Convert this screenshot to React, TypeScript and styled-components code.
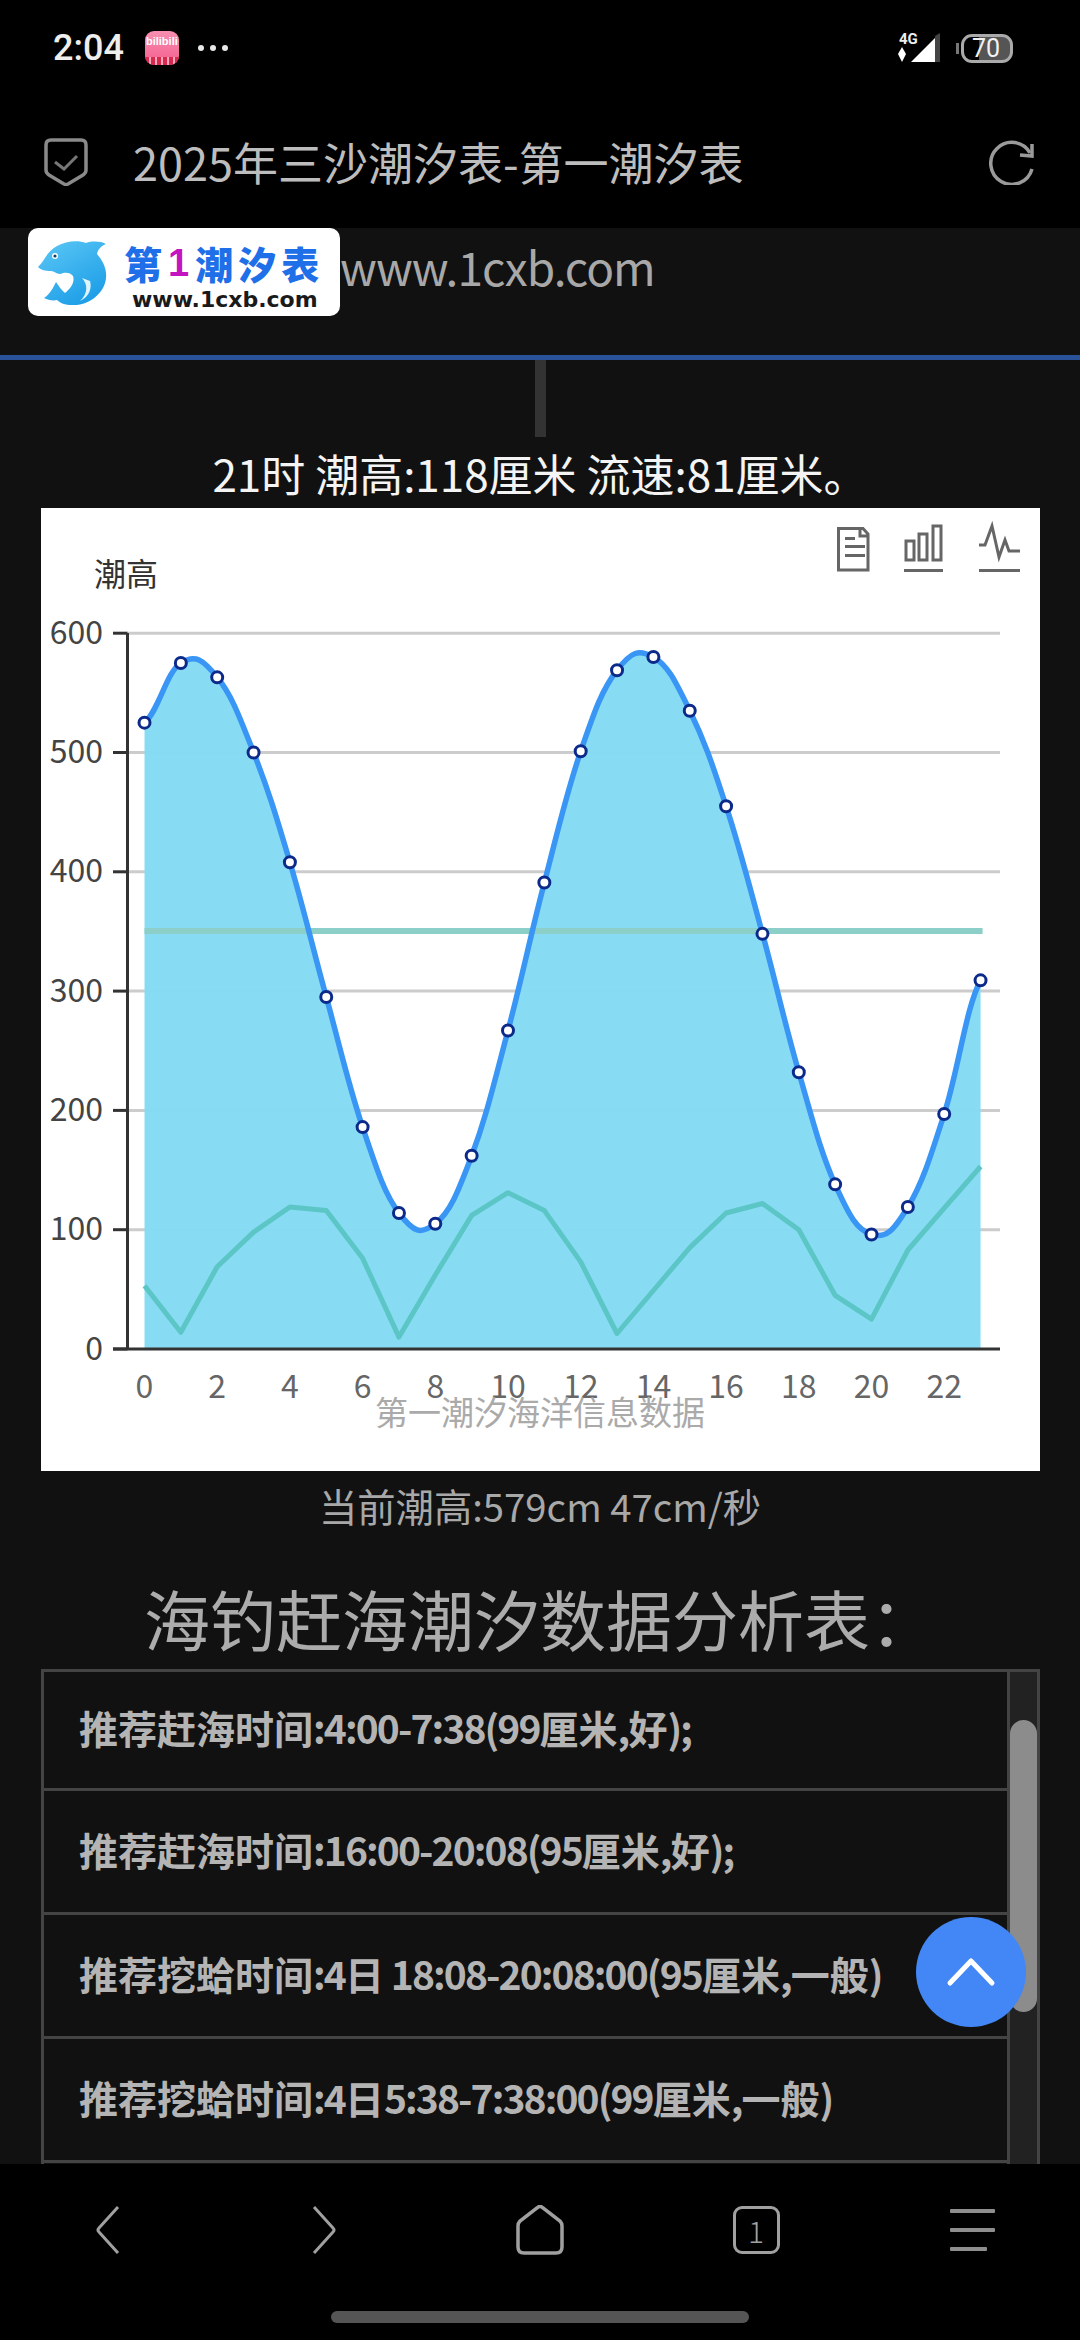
import * as React from "react"
import styled, { createGlobalStyle } from "styled-components"

const CJK = `"Noto Sans CJK SC", "Noto Sans", sans-serif`

const GlobalStyle = createGlobalStyle`
  html, body {
    margin: 0;
    padding: 0;
    background: #000;
  }
  * {
    box-sizing: border-box;
  }
`

const Screen = styled.div`
  position: relative;
  display: flex;
  flex-direction: column;
  width: 1080px;
  height: 2340px;
  overflow: hidden;
  background: #000;
  font-family: ${CJK};
`

const StatusBar = styled.div`
  display: flex;
  align-items: center;
  justify-content: space-between;
  height: 96px;
  padding: 0 67px 0 53px;
`

const StatusGroup = styled.div`
  display: flex;
  align-items: center;
`

const Clock = styled.span`
  font-family: Roboto, sans-serif;
  font-size: 36px;
  font-weight: 500;
  color: #eee;
  margin-right: 21px;
`

const AppBadge = styled.div`
  display: flex;
  flex-direction: column;
  align-items: center;
  justify-content: space-between;
  width: 34px;
  height: 34px;
  margin-right: 19px;
  border-radius: 9px;
  overflow: hidden;
  background: linear-gradient(#f78fb0, #f45f8e);
`

const BadgeLabel = styled.span`
  font-family: "Liberation Sans", sans-serif;
  font-size: 11px;
  font-weight: 700;
  line-height: 12px;
  margin-top: 4px;
  color: #fff;
`

const BadgeStrip = styled.div`
  width: 100%;
  height: 8px;
  background: repeating-linear-gradient(90deg, #d8284f 0 4px, #f7a9b9 4px 6px);
`

const Dots = styled.div`
  display: flex;
  gap: 6px;
`

const Dot = styled.i`
  width: 6px;
  height: 6px;
  border-radius: 50%;
  background: #e8e8e8;
`

const BatteryNub = styled.i`
  width: 3px;
  height: 11px;
  margin: 0 2px 0 13px;
  background: #777;
`

const Battery = styled.div`
  display: flex;
  align-items: center;
  width: 52px;
  height: 29px;
  padding-left: 8px;
  border: 3px solid #aaa;
  border-radius: 11px;
  background: linear-gradient(90deg, #000 32%, #555 32%);
  font-family: Roboto, sans-serif;
  font-size: 25px;
  color: #f2f2f2;
`

const AddressBar = styled.div`
  display: flex;
  align-items: center;
  height: 132px;
  padding: 0 45px 0 44px;
`

const PageTitle = styled.div`
  flex: 1;
  margin-left: 45px;
  font-size: 45px;
  line-height: 60px;
  color: #bdbdbd;
  white-space: nowrap;
`

const Page = styled.main`
  flex: 1;
  min-height: 0;
  overflow: hidden;
  background: #111;
`

const LogoRow = styled.div`
  display: flex;
  align-items: flex-start;
  height: 127px;
  padding-left: 28px;
`

const LogoPlate = styled.div`
  display: flex;
  align-items: flex-start;
  width: 312px;
  height: 88px;
  padding: 12px 0 0 10px;
  border-radius: 10px;
  background: #fff;
`

const LogoWords = styled.div`
  display: flex;
  flex-direction: column;
  margin: 3px 0 0 16px;
`

const LogoName = styled.div`
  display: flex;
  align-items: center;
  height: 40px;
  font-size: 38px;
  font-weight: 900;
  line-height: 40px;
  letter-spacing: 5px;
  color: #1f6fe8;
  white-space: nowrap;
`

const LogoNumeral = styled.span`
  margin: 0 6px 0 1px;
  letter-spacing: 0;
  font-family: "Liberation Sans", sans-serif;
  color: #c414c0;
`

const LogoUrl = styled.div`
  margin: 5px 0 0 8px;
  font-family: "DejaVu Sans", sans-serif;
  font-size: 22px;
  font-weight: 700;
  line-height: 24px;
  color: #1a1a1a;
  white-space: nowrap;
`

const SiteUrl = styled.span`
  font-size: 46px;
  line-height: 76px;
  letter-spacing: -1px;
  color: #a8a8a8;
`

const BlueRule = styled.div`
  height: 5px;
  background: #2a5298;
`

const Stem = styled.div`
  width: 11px;
  height: 77px;
  margin: 0 auto;
  background: #333;
`

const Reading = styled.div`
  padding-top: 3px;
  height: 71px;
  font-size: 44px;
  line-height: 66px;
  text-align: center;
  color: #f4f4f4;
`

const ChartCard = styled.div`
  width: 999px;
  height: 963px;
  margin-left: 41px;
  background: #fff;
`

const ChartSvg = styled.svg`
  display: block;
  width: 999px;
  height: 963px;
`

const Caption = styled.div`
  height: 74px;
  font-size: 38.3px;
  line-height: 70px;
  text-align: center;
  color: #a8a8a8;
`

const Heading = styled.h2`
  height: 124px;
  margin: 0;
  padding-top: 25px;
  font-size: 66px;
  font-weight: 400;
  line-height: 94px;
  text-align: center;
  color: #acacac;
  white-space: nowrap;
`

const Table = styled.div`
  display: flex;
  width: 999px;
  margin-left: 41px;
  border: 3px solid #444;
  border-bottom: 0;
`

const RowList = styled.div`
  width: 966px;
  border-right: 3px solid #444;
`

const Row = styled.div`
  display: flex;
  align-items: center;
  height: 124px;
  padding: 0 0 6px 35px;
  border-bottom: 3px solid #444;
  font-size: 39px;
  font-weight: 700;
  color: #b4b4b4;
  white-space: pre;

  &:first-child {
    height: 119px;
  }
`

// digits and punctuation in the list are set narrower than the Chinese
const TightRun = styled.span`
  letter-spacing: -1.9px;
`

const ScrollTrack = styled.div`
  flex: 1;
  padding-top: 48px;
  background: #222;
`

const ScrollThumb = styled.div`
  width: 27px;
  height: 292px;
  border-radius: 14px;
  background: #8c8c8c;
`

const TopButton = styled.button`
  position: absolute;
  top: 1917px;
  right: 54px;
  display: flex;
  align-items: center;
  justify-content: center;
  width: 110px;
  height: 110px;
  padding: 0;
  border: 0;
  border-radius: 50%;
  background: #4287f5;
`

const BottomNav = styled.nav`
  display: grid;
  grid-template-columns: repeat(5, 216px);
  align-items: center;
  justify-items: center;
  height: 132px;
`

const TabCount = styled.div`
  display: flex;
  align-items: center;
  justify-content: center;
  width: 47px;
  height: 48px;
  border: 3px solid #a0a0a0;
  border-radius: 9px;
  font-size: 30px;
  font-weight: 300;
  color: #a0a0a0;
`

const MenuIcon = styled.div`
  display: flex;
  flex-direction: column;
  width: 45px;
  gap: 15px;
`

const MenuBar = styled.i<{ $width: number }>`
  display: block;
  width: ${(p) => p.$width}px;
  height: 4px;
  border-radius: 1px;
  background: #8e8e8e;
`

const HomeIndicator = styled.div`
  flex: none;
  width: 418px;
  height: 12px;
  margin: 15px auto 17px;
  border-radius: 6px;
  background: #555;
`

const listRows = [
  "推荐赶海时间:4:00-7:38(99厘米,好);",
  "推荐赶海时间:16:00-20:08(95厘米,好);",
  "推荐挖蛤时间:4日 18:08-20:08:00(95厘米,一般)",
  "推荐挖蛤时间:4日5:38-7:38:00(99厘米,一般)",
  "",
]

const tide = [525, 575, 563, 500, 408, 295, 186, 114, 105, 162, 267, 391, 501, 569, 580, 535, 455, 348, 232, 138, 96, 119, 197, 309]
const flow = [53, 14, 69, 98, 119, 116, 76, 10, 62, 112, 131, 116, 73, 13, 49, 85, 114, 122, 100, 45, 25, 83, 118, 153]
const yTicks = [0, 100, 200, 300, 400, 500, 600]
const xTicks = [0, 2, 4, 6, 8, 10, 12, 14, 16, 18, 20, 22]

// plot area, in the card's own coordinates
const plotLeft = 86.5
const plotRight = 959
const plotBottom = 841
const firstX = 103.5
const stepX = 36.35
const perUnit = 1.193

const px = (i: number) => firstX + i * stepX
const py = (v: number) => plotBottom - v * perUnit

const straightPath = (values: number[]) =>
  values.map((v, i) => `${i ? "L" : "M"}${px(i).toFixed(1)} ${py(v).toFixed(1)}`).join(" ")

// Catmull-Rom style smoothing through every sample
const smoothPath = (values: number[]) => {
  let d = `M${px(0).toFixed(1)} ${py(values[0]).toFixed(1)}`
  for (let i = 0; i < values.length - 1; i++) {
    const prev = values[Math.max(i - 1, 0)]
    const next = values[Math.min(i + 2, values.length - 1)]
    const c1y = py(values[i]) + (py(values[i + 1]) - py(prev)) * 0.2
    const c2y = py(values[i + 1]) - (py(next) - py(values[i])) * 0.2
    d += ` C${(px(i) + stepX * 0.4).toFixed(1)} ${c1y.toFixed(1)} ${(px(i + 1) - stepX * 0.4).toFixed(1)} ${c2y.toFixed(1)} ${px(i + 1).toFixed(1)} ${py(values[i + 1]).toFixed(1)}`
  }
  return d
}

const tightenLatin = (text: string) =>
  text.split(/([\x20-\x7e]+)/).map((part, i) => (i % 2 ? <TightRun key={i}>{part}</TightRun> : part))

const TideChart = () => {
  const curve = smoothPath(tide)
  const area = `${curve} L${px(23)} ${plotBottom} L${px(0)} ${plotBottom} Z`
  return (
    <ChartSvg viewBox="0 0 999 963" fontFamily={CJK}>
      {yTicks.slice(1).map((v) => (
        <line key={v} x1={plotLeft} x2={plotRight} y1={py(v)} y2={py(v)} stroke="#ccc" strokeWidth={3} />
      ))}
      <path d={area} fill="#85dbf4" fillOpacity={0.98} />
      <line x1={px(0)} x2={px(23) + 2} y1={423} y2={423} stroke="#8ccfc8" strokeWidth={6} />
      <path d={straightPath(flow)} fill="none" stroke="#5cc6c6" strokeWidth={5} strokeLinejoin="round" />
      <path d={curve} fill="none" stroke="#3a96f5" strokeWidth={5.5} />
      {tide.map((v, i) => (
        <circle key={i} cx={px(i)} cy={py(v)} r={5.5} fill="#fff" stroke="#0c2a8a" strokeWidth={3} />
      ))}

      <line x1={plotLeft} x2={plotLeft} y1={125} y2={plotBottom} stroke="#333" strokeWidth={3} />
      <line x1={72} x2={plotRight} y1={plotBottom} y2={plotBottom} stroke="#333" strokeWidth={3} />
      {yTicks.map((v) => (
        <g key={v}>
          <line x1={72} x2={plotLeft} y1={py(v)} y2={py(v)} stroke="#333" strokeWidth={3} />
          <text x={62} y={py(v) + 10.5} textAnchor="end" fontSize={32} fill="#444">
            {v}
          </text>
        </g>
      ))}
      {xTicks.map((v) => (
        <text key={v} x={px(v)} y={890} textAnchor="middle" fontSize={32} fill="#666">
          {v}
        </text>
      ))}

      <text x={53} y={78} fontSize={32} fill="#333">
        潮高
      </text>
      <text x={499} y={917} textAnchor="middle" fontSize={33} fill="#aaa">
        第一潮汐海洋信息数据
      </text>

      {/* toolbox: data view, bar and line switches */}
      <g fill="none" stroke="#666" strokeWidth={3}>
        <path d="M797.5 20.5 H822 L827 26 V62 H797.5 Z M819 20.5 V28 H827" />
        <path d="M804 30.5 H814 M804 38.5 H824 M804 47.5 H824" />
        <path d="M863 62.5 H902" />
        <path d="M865 33 H873 V52 H865 Z M878 26 H886 V52 H878 Z M892 18 H900 V52 H892 Z" />
        <path d="M938 62.5 H979" />
        <path d="M938 37 H944 L951 18 L958 49 L964 32 L968 43 H979" />
      </g>
    </ChartSvg>
  )
}

export default function App() {
  return (
    <Screen>
      <GlobalStyle />
      <StatusBar>
        <StatusGroup>
          <Clock>2:04</Clock>
          <AppBadge>
            <BadgeLabel>bilibili</BadgeLabel>
            <BadgeStrip />
          </AppBadge>
          <Dots>
            <Dot />
            <Dot />
            <Dot />
          </Dots>
        </StatusGroup>
        <StatusGroup>
          <svg width="46" height="36" viewBox="0 -3 46 36">
            <text x="2" y="10.5" fontFamily="Roboto, sans-serif" fontSize="15" fontWeight="700" fill="#eee">
              4G
            </text>
            <path d="M5 14 L9 21 L5 29 L1 21 Z" fill="#fff" />
            <path d="M14 29 L38 5 V29 Z" fill="#fff" />
            <path d="M38 3 L43 0 V29 H38 Z" fill="#444" />
          </svg>
          <BatteryNub />
          <Battery>70</Battery>
        </StatusGroup>
      </StatusBar>

      <AddressBar>
        <svg width="44" height="48" viewBox="0 0 44 48" fill="none" stroke="#8a8a8a" strokeWidth="3.5">
          <path d="M2 7 Q2 2 7 2 H37 Q42 2 42 7 V32 Q42 35 39 37 L24 46 Q22 47 20 46 L5 37 Q2 35 2 32 Z" />
          <path d="M11 24 L20 31 L33 18" strokeWidth="3" stroke="#777" />
        </svg>
        <PageTitle>2025年三沙潮汐表-第一潮汐表</PageTitle>
        <svg width="46" height="46" viewBox="0 0 46 46" fill="none" stroke="#9a9a9a" strokeWidth="3.5">
          <path d="M43 30 A21 21 0 1 1 41 14" />
          <path d="M43 5 L43 17 L31 16" />
        </svg>
      </AddressBar>

      <Page>
        <LogoRow>
          <LogoPlate>
            <svg width="70" height="66" viewBox="0 0 70 66">
              <defs>
                <linearGradient id="dolphinSkin" x1="0" y1="0" x2="0.6" y2="1">
                  <stop offset="0" stopColor="#5cc8f5" />
                  <stop offset="1" stopColor="#1f9fe8" />
                </linearGradient>
              </defs>
              <path
                d="M0 27 C6 22 8 12 19 6 C28 1 40 0 48 3 C54 1 62 1 68 4 C63 6 60 9 59 14 C65 21 69 29 68 38 C67 52 52 66 34 65 C27 65 22 63 19 60 C15 61 10 60 6 58 C12 54 15 48 18 42 C21 46 23 50 27 53 C33 48 37 42 35 36 C33 33 29 32 25 33 C20 36 17 31 13 31 C7 31 3 30 0 27 Z"
                fill="url(#dolphinSkin)"
              />
              <path d="M44 38 C50 44 50 54 42 61 C47 59 55 52 52 41 Z" fill="#dff4fd" />
              <circle cx="17" cy="16" r="3" fill="#fff" />
              <circle cx="17" cy="16" r="1.6" fill="#12405f" />
            </svg>
            <LogoWords>
              <LogoName>
                第<LogoNumeral>1</LogoNumeral>潮汐表
              </LogoName>
              <LogoUrl>www.1cxb.com</LogoUrl>
            </LogoWords>
          </LogoPlate>
          <SiteUrl>www.1cxb.com</SiteUrl>
        </LogoRow>
        <BlueRule />
        <Stem />
        <Reading>21时 潮高:118厘米 流速:81厘米。</Reading>
        <ChartCard>
          <TideChart />
        </ChartCard>
        <Caption>当前潮高:579cm 47cm/秒</Caption>
        <Heading>海钓赶海潮汐数据分析表：</Heading>
        <Table>
          <RowList>
            {listRows.map((text, i) => (
              <Row key={i}>{tightenLatin(text)}</Row>
            ))}
          </RowList>
          <ScrollTrack>
            <ScrollThumb />
          </ScrollTrack>
        </Table>
      </Page>

      <TopButton aria-label="top">
        <svg width="50" height="30" viewBox="0 0 50 30" fill="none" stroke="#fff" strokeWidth="5" strokeLinecap="round" strokeLinejoin="round">
          <path d="M4 26 L25 4 L46 26" />
        </svg>
      </TopButton>

      <BottomNav>
        <svg width="24" height="48" viewBox="0 0 24 48" fill="none" stroke="#a0a0a0" strokeWidth="3">
          <path d="M22 1 L3 22 Q1 24 3 26 L22 47" />
        </svg>
        <svg width="24" height="48" viewBox="0 0 24 48" fill="none" stroke="#a0a0a0" strokeWidth="3">
          <path d="M2 1 L21 22 Q23 24 21 26 L2 47" />
        </svg>
        <svg width="48" height="50" viewBox="0 0 48 50" fill="none" stroke="#a0a0a0" strokeWidth="3.5">
          <path d="M21 3 Q24 0 27 3 L44 16 Q46 18 46 21 V42 Q46 48 40 48 H8 Q2 48 2 42 V21 Q2 18 4 16 Z" />
        </svg>
        <TabCount>1</TabCount>
        <MenuIcon>
          <MenuBar $width={45} />
          <MenuBar $width={45} />
          <MenuBar $width={37} />
        </MenuIcon>
      </BottomNav>
      <HomeIndicator />
    </Screen>
  )
}
